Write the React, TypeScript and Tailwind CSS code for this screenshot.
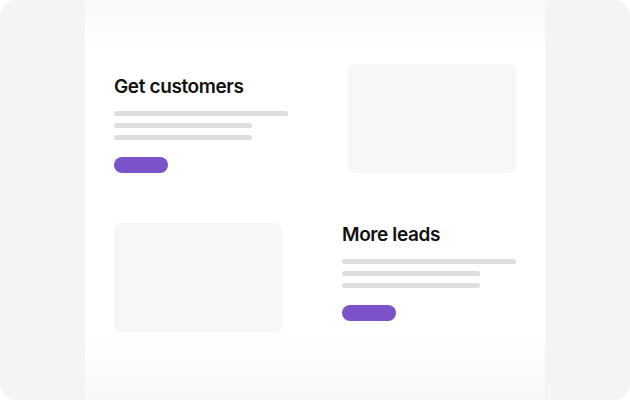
import React from "react";

function TextBlock({ title, className }: { title: string; className?: string }) {
  return (
    <div className={"w-[174px] flex flex-col " + (className ?? "")}>
      <div
        className="text-[19px] leading-[24px] font-semibold tracking-[-0.02em] text-[#111111]"
        style={{ fontFamily: "Inter, 'Noto Sans', sans-serif" }}
      >
        {title}
      </div>
      <div className="mt-[12px] flex flex-col gap-[7px]">
        <div className="h-[5px] w-[174px] rounded-full bg-[#dedede]" />
        <div className="h-[5px] w-[138px] rounded-full bg-[#dedede]" />
        <div className="h-[5px] w-[138px] rounded-full bg-[#dedede]" />
      </div>
      <div className="mt-[17px] h-[16px] w-[54px] rounded-full bg-[#7b52c9]" />
    </div>
  );
}

export default function App() {
  return (
    <div className="w-[630px] h-[400px] bg-white">
      <div className="h-full w-full rounded-2xl bg-[#f3f4f6] flex justify-center overflow-hidden">
        <div className="w-[460px] h-full bg-[linear-gradient(to_bottom,#f8f9fa_0px,#ffffff_50px,#ffffff_335px,#f7f8fa_400px)] px-[29px] pt-[64px] flex flex-col gap-[50px]">
          <div className="flex gap-[60px] items-start">
            <TextBlock title="Get customers" className="pt-[11px]" />
            <div className="w-[168px] h-[109px] rounded-md bg-[#f7f7f7]" />
          </div>
          <div className="flex gap-[60px] items-start">
            <div className="w-[168px] h-[109px] rounded-md bg-[#f7f7f7]" />
            <TextBlock title="More leads" />
          </div>
        </div>
      </div>
    </div>
  );
}
